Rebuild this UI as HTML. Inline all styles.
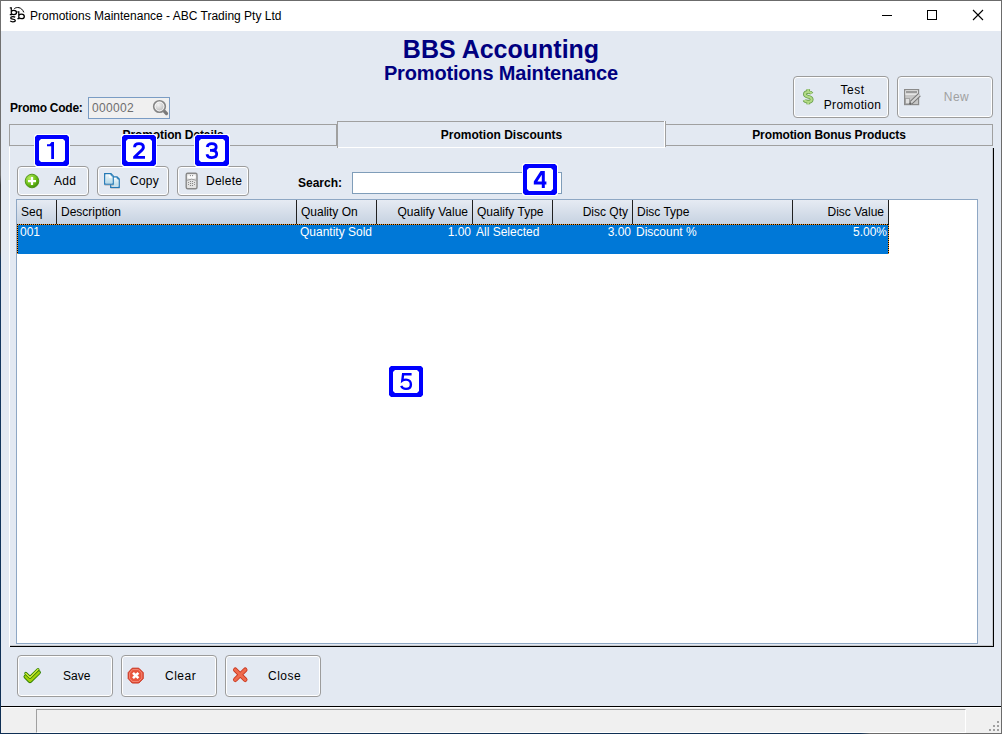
<!DOCTYPE html>
<html><head><meta charset="utf-8">
<style>
*{box-sizing:border-box;margin:0;padding:0}
html,body{width:1002px;height:734px;overflow:hidden;background:#e3e9f2;font-family:"Liberation Sans",sans-serif;font-size:12px;color:#000}
.a{position:absolute}
.t{position:absolute;white-space:nowrap;line-height:14px;height:14px}
.b{font-weight:bold}
.ls{letter-spacing:0.5px}
.btn{position:absolute;border:1px solid #9c9c9c;border-radius:4px;box-shadow:inset 0 0 0 1px #fff;background:#e3e9f2}
.badge{position:absolute;width:36px;height:33px;background:#fff;clip-path:polygon(2px 0,34px 0,36px 2px,36px 31px,34px 33px,2px 33px,0 31px,0 2px)}
.badge b{position:absolute;left:1px;top:1px;width:34px;height:31px;background:#00f;clip-path:polygon(2px 0,32px 0,34px 2px,34px 29px,32px 31px,2px 31px,0 29px,0 2px)}
.badge i{position:absolute;left:5px;top:5px;width:26px;height:23px;background:#fff;clip-path:polygon(2px 0,24px 0,26px 2px,26px 21px,24px 23px,2px 23px,0 21px,0 2px)}
.hd{position:absolute;top:0;height:24px;line-height:24px;padding:0 4px;border-right:1px solid #202020}
.cell{position:absolute;top:0;height:30px;line-height:17px;padding:0 3px;color:#fff}
.r{text-align:right;padding-right:2px}
</style></head><body>
<!-- window borders -->
<div class="a" style="left:0;top:0;width:1002px;height:1px;background:#6b6b6b"></div>
<div class="a" style="left:0;top:0;width:1px;height:734px;background:linear-gradient(#707070 0,#707070 175px,#3a3a3a 185px,#3a3a3a 250px,#163a62 262px,#0f2f54 100%)"></div>
<div class="a" style="left:1001px;top:0;width:1px;height:734px;background:#6b6b6b"></div>
<div class="a" style="left:0;top:733px;width:1002px;height:1px;background:linear-gradient(90deg,#0f2f54 0,#0f2f54 860px,#6b6b6b 870px)"></div>
<!-- title bar -->
<div class="a" style="left:1px;top:1px;width:1000px;height:30px;background:#fff"></div>
<div class="t" style="left:30px;top:9px;font-size:12px;color:#000">Promotions Maintenance - ABC Trading Pty Ltd</div>
<div class="a" style="left:882px;top:15px;width:10px;height:1px;background:#000"></div>
<div class="a" style="left:927px;top:10px;width:10px;height:10px;border:1px solid #000"></div>
<svg class="a" style="left:972px;top:9px" width="13" height="13" viewBox="0 0 13 13"><path d="M1 1L11 11M11 1L1 11" stroke="#000" stroke-width="1.1"/></svg>

<!-- headings -->
<div class="t b" style="left:0;width:1002px;text-align:center;top:35px;height:28px;line-height:28px;font-size:25px;color:#000080">BBS Accounting</div>
<div class="t b" style="left:0;width:1002px;text-align:center;top:62px;height:23px;line-height:23px;font-size:20px;color:#000080;letter-spacing:-0.17px">Promotions Maintenance</div>

<!-- promo code -->
<div class="t b" style="left:10px;top:101px;letter-spacing:-0.25px">Promo Code:</div>
<div class="a" style="left:88px;top:97px;width:82px;height:22px;border:1px solid #7a9cc4;background:#f0f0f0"></div>
<div class="t" style="left:92px;top:100.5px;color:#6e6e6e;font-size:12px;letter-spacing:0.33px">000002</div>

<!-- top-right buttons -->
<div class="btn" style="left:793px;top:76px;width:96px;height:42px"></div>
<div class="btn" style="left:897px;top:76px;width:96px;height:42px"></div>
<div class="t ls" style="left:793px;width:96px;top:83px;padding-left:23px;text-align:center">Test</div>
<div class="t" style="left:793px;width:96px;top:98px;padding-left:23px;text-align:center;letter-spacing:0.3px">Promotion</div>
<div class="t ls" style="left:897px;width:96px;top:90px;padding-left:23px;text-align:center;color:#a0a0a0">New</div>

<!-- tabs -->
<div class="a" style="left:9px;top:124px;width:328px;height:22px;border:1px solid #a0a0a0"></div>
<div class="a" style="left:665px;top:124px;width:328px;height:22px;border:1px solid #a0a0a0"></div>
<div class="a" style="left:337px;top:121px;width:329px;height:27px;background:#e3e9f2"></div>
<div class="a" style="left:337px;top:121px;width:327px;height:1px;background:#a0a0a0"></div>
<div class="a" style="left:337px;top:121px;width:1px;height:27px;background:#a0a0a0"></div>
<div class="a" style="left:664px;top:121px;width:1px;height:27px;background:#fff"></div>
<div class="a" style="left:665px;top:121px;width:1px;height:26px;background:#a0a0a0"></div>
<div class="a" style="left:338px;top:147px;width:326px;height:1px;background:#fff"></div>
<div class="t b" style="left:9px;width:328px;top:128px;text-align:center;letter-spacing:-0.1px">Promotion Details</div>
<div class="t b" style="left:337px;width:329px;top:128px;text-align:center">Promotion Discounts</div>
<div class="t b" style="left:665px;width:328px;top:128px;text-align:center;letter-spacing:-0.1px">Promotion Bonus Products</div>

<!-- panel borders -->
<div class="a" style="left:9px;top:147px;width:1px;height:500px;background:#fff"></div>
<div class="a" style="left:993px;top:148px;width:1px;height:499px;background:#000"></div>
<div class="a" style="left:10px;top:646px;width:984px;height:1px;background:#000"></div>
<div class="a" style="left:992px;top:148px;width:1px;height:498px;background:#c6c9ce"></div>
<div class="a" style="left:10px;top:645px;width:983px;height:1px;background:#c6c9ce"></div>

<!-- toolbar buttons -->
<div class="btn" style="left:17px;top:166px;width:72px;height:30px"></div>
<div class="btn" style="left:97px;top:166px;width:72px;height:30px"></div>
<div class="btn" style="left:177px;top:166px;width:72px;height:30px"></div>
<div class="t" style="left:54px;top:174px;letter-spacing:0.25px">Add</div>
<div class="t" style="left:130px;top:174px;letter-spacing:0.25px">Copy</div>
<div class="t" style="left:206px;top:174px;letter-spacing:0.25px">Delete</div>
<div class="t b" style="left:298px;top:176px">Search:</div>
<div class="a" style="left:352px;top:172px;width:210px;height:22px;border:1px solid #7f9db9;background:#fff"></div>

<!-- grid -->
<div class="a" style="left:16px;top:199px;width:962px;height:445px;border:1px solid #8ea7c4;background:#fff">
  <div class="a" style="left:0;top:0;width:872px;height:24px;background:linear-gradient(#e6ebf3,#c6d2e1)">
    <div class="hd" style="left:0;width:40px">Seq</div>
    <div class="hd" style="left:40px;width:240px">Description</div>
    <div class="hd" style="left:280px;width:80px">Quality On</div>
    <div class="hd" style="left:360px;width:96px;text-align:right">Qualify Value</div>
    <div class="hd" style="left:456px;width:80px">Qualify Type</div>
    <div class="hd" style="left:536px;width:80px;text-align:right">Disc Qty</div>
    <div class="hd" style="left:616px;width:160px">Disc Type</div>
    <div class="hd" style="left:776px;width:96px;text-align:right">Disc Value</div>
  </div>
  <div class="a" style="left:0;top:24px;width:872px;height:30px;background:#0078d7">
    <div class="a" style="left:0;top:0;width:872px;height:1px;background:repeating-linear-gradient(90deg,#000 0 1px,#f7941d 1px 2px)"></div>
    <div class="a" style="left:0;top:0;width:1px;height:30px;background:repeating-linear-gradient(#000 0 1px,#f7941d 1px 2px)"></div>
    <div class="a" style="left:871px;top:0;width:1px;height:30px;background:repeating-linear-gradient(#000 0 1px,#f7941d 1px 2px)"></div>
    <div class="cell" style="left:0;width:40px">001</div>
    <div class="cell" style="left:280px;width:80px">Quantity Sold</div>
    <div class="cell" style="left:360px;width:96px;text-align:right;padding-right:2px">1.00</div>
    <div class="cell" style="left:456px;width:80px">All Selected</div>
    <div class="cell" style="left:536px;width:80px;text-align:right;padding-right:2px">3.00</div>
    <div class="cell" style="left:616px;width:160px">Discount %</div>
    <div class="cell" style="left:776px;width:96px;text-align:right;padding-right:2px">5.00%</div>
  </div>
</div>

<!-- bottom buttons -->
<div class="btn" style="left:17px;top:655px;width:96px;height:42px"></div>
<div class="btn" style="left:121px;top:655px;width:96px;height:42px"></div>
<div class="btn" style="left:225px;top:655px;width:96px;height:42px"></div>
<div class="t" style="left:63px;top:669px">Save</div>
<div class="t ls" style="left:165px;top:669px">Clear</div>
<div class="t ls" style="left:268px;top:669px">Close</div>

<!-- status bar -->
<div class="a" style="left:1px;top:706px;width:1000px;height:1px;background:#000"></div>
<div class="a" style="left:1px;top:707px;width:1000px;height:26px;background:#f0f0f0;border-top:1px solid #fff"></div>
<div class="a" style="left:36px;top:709px;width:930px;height:24px;border-top:1px solid #a0a0a0;border-left:1px solid #a0a0a0;border-right:1px solid #fff;border-bottom:1px solid #fff"></div>


<div class="a" style="left:997px;top:721px;width:2px;height:2px;background:#a0a0a0"></div>
<div class="a" style="left:993px;top:725px;width:2px;height:2px;background:#a0a0a0"></div>
<div class="a" style="left:997px;top:725px;width:2px;height:2px;background:#a0a0a0"></div>
<div class="a" style="left:989px;top:729px;width:2px;height:2px;background:#a0a0a0"></div>
<div class="a" style="left:993px;top:729px;width:2px;height:2px;background:#a0a0a0"></div>
<div class="a" style="left:997px;top:729px;width:2px;height:2px;background:#a0a0a0"></div>
<!-- icons -->
<svg class="a" style="left:8px;top:5px" width="20" height="20" viewBox="8 5 20 20">
 <g fill="none" stroke="#000">
  <path d="M9.8 7.9H11.3V14.6M9.8 14.6H12" stroke-width="1.2"/>
  <path d="M11.3 11.4C12 10.6 12.9 10.3 13.9 10.3C15.6 10.3 16.5 11.3 16.5 12.5C16.5 13.8 15.5 14.6 13.9 14.6C12.9 14.6 12 14.3 11.3 13.6" stroke-width="1.3"/>
  <path d="M15.2 17.3C14.7 16.8 13.9 16.6 12.8 16.6C11.5 16.6 10.7 17.1 10.7 17.9C10.7 18.8 11.6 19 12.8 19.2C14.2 19.4 15.3 19.7 15.3 20.6C15.3 21.4 14.4 21.8 12.8 21.8C11.7 21.8 10.8 21.5 10.2 20.9" stroke-width="1.3"/>
  <path d="M17.4 11.9H18.8V18.6M17.4 18.6H19.4" stroke-width="1.2"/>
  <path d="M18.8 15.2C19.5 14.4 20.4 14.1 21.5 14.1C23.3 14.1 24.3 15.1 24.3 16.4C24.3 17.8 23.2 18.6 21.5 18.6C20.4 18.6 19.5 18.3 18.8 17.6" stroke-width="1.3"/>
  <path d="M14.3 8.6C16.4 6.9 21.6 6.6 23.8 12.4" stroke-width="1"/>
 </g>
</svg>
<svg class="a" style="left:150px;top:98px" width="20" height="20" viewBox="150 98 20 20">
 <defs><radialGradient id="mg" cx="0.4" cy="0.35" r="0.7"><stop offset="0" stop-color="#f4f4f4"/><stop offset="1" stop-color="#b0b0b0"/></radialGradient></defs>
 <path d="M164.2 111.2L166.5 113.5" stroke="#7a7a7a" stroke-width="3.2" stroke-linecap="round"/>
 <circle cx="159.5" cy="106.5" r="5.8" fill="url(#mg)" stroke="#858585" stroke-width="1.6"/>
 <circle cx="159.5" cy="106.5" r="4.4" fill="none" stroke="#fff" stroke-width="0.8"/>
</svg>
<svg class="a" style="left:24px;top:173px" width="16" height="16" viewBox="24 173 16 16">
 <defs><radialGradient id="pg" cx="0.35" cy="0.3" r="0.75"><stop offset="0" stop-color="#b8ec60"/><stop offset="0.6" stop-color="#6cbf1a"/><stop offset="1" stop-color="#3f8c08"/></radialGradient></defs>
 <circle cx="32" cy="181" r="6.8" fill="url(#pg)" stroke="#4b8f12" stroke-width="0.9"/>
 <rect x="28" y="180" width="8" height="2.2" fill="#fff"/>
 <rect x="30.9" y="177" width="2.2" height="8" fill="#fff"/>
</svg>
<svg class="a" style="left:102px;top:171px" width="20" height="20" viewBox="102 171 20 20">
 <defs><linearGradient id="dg" x1="0" y1="0" x2="0" y2="1"><stop offset="0" stop-color="#e4f1f6"/><stop offset="1" stop-color="#a6d1e2"/></linearGradient></defs>
 <rect x="110.6" y="187.6" width="9" height="0.9" fill="#8a7d78" opacity=".6"/>
 <path d="M110.7 176.8H117L119.2 179V187.3H110.7Z" fill="#fff" stroke="#2379b5" stroke-width="1.3"/>
 <rect x="111.8" y="179" width="6.4" height="6.8" fill="url(#dg)" opacity=".8"/>
 <path d="M116.6 177.6Q117.2 179 118.6 179.4" fill="none" stroke="#2379b5" stroke-width="1"/>
 <rect x="104.6" y="184.6" width="9" height="0.9" fill="#8a7d78" opacity=".6"/>
 <path d="M104.7 173.7H111L113.2 175.9V184.2H104.7Z" fill="#fff" stroke="#2379b5" stroke-width="1.3"/>
 <rect x="105.8" y="175.2" width="6.4" height="7.8" fill="url(#dg)" opacity=".8"/>
 <rect x="109.2" y="175" width="2.5" height="2.8" fill="#fff"/>
 <path d="M110.6 174.5Q111.2 176 112.6 176.4" fill="none" stroke="#2379b5" stroke-width="1"/>
</svg>
<svg class="a" style="left:184px;top:171px" width="16" height="20" viewBox="184 171 16 20">
 <rect x="186.2" y="173.2" width="10.8" height="15.6" rx="1.5" fill="#e2e2e2" stroke="#888" stroke-width="1.4"/>
 <ellipse cx="191.6" cy="176.8" rx="4.2" ry="2" fill="#fbfbfb"/><path d="M187 180.3Q191.6 178 196.2 180.3" fill="none" stroke="#9a9a9a" stroke-width="1"/><circle cx="190.4" cy="175.6" r=".6" fill="#777"/><circle cx="192.6" cy="175.6" r=".6" fill="#777"/>
 <g fill="#777"><circle cx="190.5" cy="181.5" r=".6"/><circle cx="192.5" cy="181.5" r=".6"/><circle cx="190.5" cy="183.5" r=".6"/><circle cx="192.5" cy="183.5" r=".6"/><circle cx="190.5" cy="185.5" r=".6"/><circle cx="192.5" cy="185.5" r=".6"/><circle cx="188.5" cy="182.5" r=".5"/><circle cx="194.5" cy="182.5" r=".5"/><circle cx="188.5" cy="184.5" r=".5"/><circle cx="194.5" cy="184.5" r=".5"/></g>
</svg>
<svg class="a" style="left:801px;top:87px" width="14" height="20" viewBox="801 87 14 20">
 <path d="M811.7 93.6C811.1 92.5 809.8 92 808.2 92C806.3 92 804.9 92.8 804.9 94.3C804.9 96 806.7 96.4 808.3 96.8C810.1 97.2 811.7 97.7 811.7 99.4C811.7 101 810.2 101.7 808 101.7C806.3 101.7 805 101.2 804.4 100M808.2 89.2V92M808.2 101.6V104.3" fill="none" stroke="#639c45" stroke-width="3.7" stroke-linecap="butt" stroke-linejoin="round"/>
 <path d="M811.7 93.6C811.1 92.5 809.8 92 808.2 92C806.3 92 804.9 92.8 804.9 94.3C804.9 96 806.7 96.4 808.3 96.8C810.1 97.2 811.7 97.7 811.7 99.4C811.7 101 810.2 101.7 808 101.7C806.3 101.7 805 101.2 804.4 100M808.2 89.2V92M808.2 101.6V104.3" fill="none" stroke="#b3da86" stroke-width="2.1" stroke-linecap="butt" stroke-linejoin="round"/>
</svg>
<svg class="a" style="left:902px;top:87px" width="20" height="20" viewBox="902 87 20 20">
 <rect x="904.6" y="89.6" width="14" height="15" fill="#c6c6c6" stroke="#8a8a8a" stroke-width="1.2"/>
 <rect x="905.4" y="90.4" width="12.4" height="4.6" fill="#e4e4e4"/><rect x="906" y="91" width="11" height="2.2" fill="#9c9c9c"/>
 <rect x="905.6" y="98.4" width="4" height="5.4" fill="#e0e0e0" stroke="#9a9a9a" stroke-width="0.8"/>
 <path d="M911 102.8L919.4 94.8" stroke="#777" stroke-width="4"/>
 <path d="M911 102.8L919.4 94.8" stroke="#d4d4d4" stroke-width="2"/>
 <path d="M909.6 104.2L911 102.8" stroke="#666" stroke-width="2"/>
</svg>
<svg class="a" style="left:22px;top:666px" width="20" height="20" viewBox="22 666 20 20">
 <path d="M25.8 676.6L30 680.8L38.6 672.4" fill="none" stroke="#2f8000" stroke-width="4.6" stroke-linejoin="round" stroke-linecap="round"/>
 <path d="M25.8 676.6L30 680.8L38.6 672.4" fill="none" stroke="#a4d00c" stroke-width="2.8" stroke-linejoin="round" stroke-linecap="round"/>
 <path d="M25.8 673.4L30 677.4L38 669.6" fill="none" stroke="#2f8000" stroke-width="3" stroke-linejoin="round" stroke-linecap="round"/>
 <path d="M25.8 673.4L30 677.4L38 669.6" fill="none" stroke="#d6ee3a" stroke-width="1.4" stroke-linejoin="round" stroke-linecap="round"/>
</svg>
<svg class="a" style="left:126px;top:666px" width="20" height="20" viewBox="126 666 20 20">
 <path d="M132.2 668.2H138.8L143.2 672.6V678.6L138.8 683H132.2L128.2 678.6V672.6Z" fill="#e8543c" stroke="#c9301c" stroke-width="1"/>
 <path d="M132.6 669.6H138.4L141.8 673V678.2L138.4 681.6H132.6L129.6 678.2V673Z" fill="none" stroke="#f7a090" stroke-width="0.7"/>
 <path d="M133 672.8L138.4 678.2M138.4 672.8L133 678.2" stroke="#fff" stroke-width="2.6"/>
</svg>
<svg class="a" style="left:231px;top:666px" width="18" height="18" viewBox="231 666 18 18">
 <path d="M235.3 669.8L245.2 679.7M245.2 669.8L235.3 679.7" stroke="#c8361e" stroke-width="4.6" stroke-linecap="round"/>
 <path d="M235.3 669.8L245.2 679.7M245.2 669.8L235.3 679.7" stroke="#ef6a4c" stroke-width="3" stroke-linecap="round"/>
</svg>


<!-- badges -->
<div class="badge" style="left:34px;top:134px"><b></b><i></i><svg class="a" style="left:1px;top:1px" width="34" height="31" viewBox="0 0 34 31"><path d="M16.2 7H19V24H16.2Z M12 9.2H14.6L16.2 7.6V11.2H12Z" fill="#00f"/></svg></div>
<div class="badge" style="left:121px;top:134px"><b></b><i></i><svg class="a" style="left:1px;top:1px" width="34" height="31" viewBox="0 0 34 31"><path d="M12.6 12.2C12.6 9.8 14.4 8.6 17 8.6C19.7 8.6 21.4 10 21.4 12.2C21.4 14.6 19.4 15.8 17 17.8L12.6 22.2V22.4H23" fill="none" stroke="#00f" stroke-width="2.9"/></svg></div>
<div class="badge" style="left:194px;top:134px"><b></b><i></i><svg class="a" style="left:1px;top:1px" width="34" height="31" viewBox="0 0 34 31"><path d="M12.2 12C12.6 9.8 14.4 8.6 16.8 8.6C19.6 8.6 21.2 9.8 21.2 12C21.2 14.2 19.4 15.3 16.6 15.3H15M16.6 15.3C19.8 15.3 21.7 16.6 21.7 19.1C21.7 21.6 19.6 22.6 16.8 22.6C14.2 22.6 12.4 21.5 12 19.2" fill="none" stroke="#00f" stroke-width="2.8"/></svg></div>
<div class="badge" style="left:522px;top:163px"><b></b><i></i><svg class="a" style="left:1px;top:1px" width="34" height="31" viewBox="0 0 34 31"><path fill-rule="evenodd" d="M18.8 7H21.8V17.4H23.4V20.4H21.8V24H18.8V20.4H10.8V17.6L17.6 7Z M18.8 10.8L14.4 17.4H18.8Z" fill="#00f"/></svg></div>
<div class="badge" style="left:388px;top:365px"><b></b><i></i><svg class="a" style="left:1px;top:1px" width="34" height="31" viewBox="0 0 34 31"><path d="M22.6 8.3H14.1L13.3 14.6C14.3 13.9 15.5 13.6 17 13.6C19.9 13.6 21.9 15.5 21.9 18.4C21.9 21.3 19.8 22.9 17 22.9C14.7 22.9 13 21.8 12.2 19.9" fill="none" stroke="#00f" stroke-width="2.4"/></svg></div>
</body></html>
